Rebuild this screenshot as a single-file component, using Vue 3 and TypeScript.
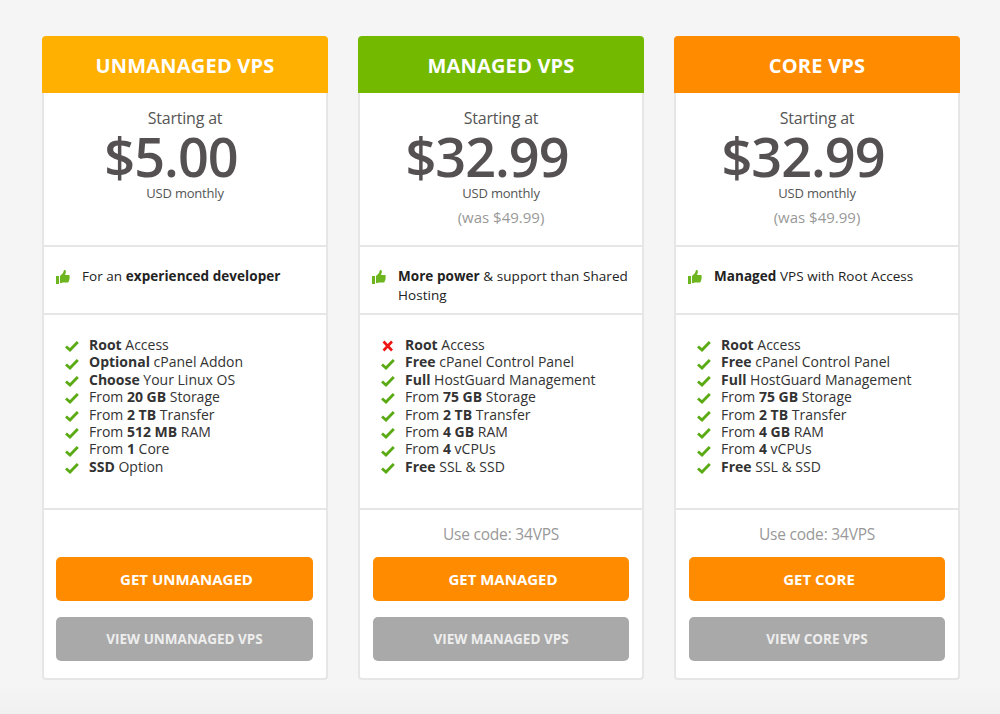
<script setup lang="ts">
interface Feature { bold: string; rest: string; before?: string; no?: boolean }
interface Plan {
  title: string; color: string; price: string; was?: string;
  pitch: { bold: string; rest: string; pre?: string }; features: Feature[];
  code?: string; cta: string; view: string;
}
const managed = (first: boolean): Feature[] => [
  { bold: 'Root', rest: ' Access', no: first },
  { bold: 'Free', rest: ' cPanel Control Panel' },
  { bold: 'Full', rest: ' HostGuard Management' },
  { before: 'From ', bold: '75 GB', rest: ' Storage' },
  { before: 'From ', bold: '2 TB', rest: ' Transfer' },
  { before: 'From ', bold: '4 GB', rest: ' RAM' },
  { before: 'From ', bold: '4', rest: ' vCPUs' },
  { bold: 'Free', rest: ' SSL & SSD' },
]
const plans: Plan[] = [
  {
    title: 'UNMANAGED VPS', color: '#ffb000', price: '$5.00',
    pitch: { pre: 'For an ', bold: 'experienced developer', rest: '' },
    features: [
      { bold: 'Root', rest: ' Access' },
      { bold: 'Optional', rest: ' cPanel Addon' },
      { bold: 'Choose', rest: ' Your Linux OS' },
      { before: 'From ', bold: '20 GB', rest: ' Storage' },
      { before: 'From ', bold: '2 TB', rest: ' Transfer' },
      { before: 'From ', bold: '512 MB', rest: ' RAM' },
      { before: 'From ', bold: '1', rest: ' Core' },
      { bold: 'SSD', rest: ' Option' },
    ],
    cta: 'GET UNMANAGED', view: 'VIEW UNMANAGED VPS',
  },
  {
    title: 'MANAGED VPS', color: '#73b900', price: '$32.99', was: '(was $49.99)',
    pitch: { bold: 'More power', rest: ' & support than Shared Hosting' },
    features: managed(true), code: 'Use code: 34VPS',
    cta: 'GET MANAGED', view: 'VIEW MANAGED VPS',
  },
  {
    title: 'CORE VPS', color: '#ff8c00', price: '$32.99', was: '(was $49.99)',
    pitch: { bold: 'Managed', rest: ' VPS with Root Access' },
    features: managed(false), code: 'Use code: 34VPS',
    cta: 'GET CORE', view: 'VIEW CORE VPS',
  },
]
</script>

<template>
  <div class="page">
    <section v-for="p in plans" :key="p.title" class="card">
      <h2 class="head" :style="{ background: p.color }">{{ p.title }}</h2>
      <div class="panel price">
        <div class="start">Starting at</div>
        <div class="amount">{{ p.price }}</div>
        <div class="usd">USD monthly</div>
        <div v-if="p.was" class="was">{{ p.was }}</div>
      </div>
      <div class="panel pitch">
        <svg class="thumb" viewBox="0 0 14 14" width="14" height="14">
          <path fill="#6db51e" d="M0 6h3v8H0zM4 6 7 3 8 0c1.500-.2 2.200 1 1.800 2.500L9 5h3.500c1.200 0 1.500 1.300.9 2 .5.7.4 1.400-.1 1.900.3.8.1 1.400-.5 1.800.1 1-.4 1.700-1.300 1.800H6.500C5.400 13.500 4.700 13.200 4 12.800z"/>
        </svg>
        <p><span v-if="p.pitch.pre">{{ p.pitch.pre }}</span><b>{{ p.pitch.bold }}</b>{{ p.pitch.rest }}</p>
      </div>
      <ul class="panel features">
        <li v-for="f in p.features" :key="f.bold + f.rest">
          <svg v-if="f.no" class="mark" viewBox="0 0 14 12" width="14" height="12">
            <path fill="none" stroke="#f01414" stroke-width="2.600" d="M2.500 1.500 11 10.500M11 1.500 2.500 10.500"/>
          </svg>
          <svg v-else class="mark" viewBox="0 0 14 12" width="14" height="12">
            <path fill="none" stroke="#5aaa14" stroke-width="2.800" d="M1 6.500 5 10 12.800 2"/>
          </svg>
          <span>{{ f.before }}<b>{{ f.bold }}</b>{{ f.rest }}</span>
        </li>
      </ul>
      <div class="panel foot">
        <div class="code">{{ p.code }}</div>
        <a class="btn cta">{{ p.cta }}</a>
        <a class="btn view">{{ p.view }}</a>
      </div>
    </section>
  </div>
</template>

<style>
body { background: #f4f4f4; }
</style>

<style scoped>
.page {
  box-sizing: border-box;
  width: 1000px;
  height: 714px;
  padding: 36px 40px 0 42px;
  display: flex;
  gap: 30px;
  align-items: flex-start;
  background: linear-gradient(#f5f5f5 0, #f5f5f5 685px, #f0f0f0 714px);
  font-family: "Open Sans", sans-serif;
  color: #333;
}
.card { width: 286px; display: flex; flex-direction: column; }
.head {
  margin: 0;
  height: 57px;
  line-height: 60px;
  text-align: center;
  color: #fff;
  font-size: 20px;
  font-weight: 700;
  letter-spacing: 0.2px;
  border-radius: 4px 4px 0 0;
}
.panel {
  box-sizing: border-box;
  background: #fff;
  border: 2px solid #e6e6e6;
  border-top: 0;
  margin: 0;
}
.price { height: 154px; padding-top: 15px; text-align: center; color: #555; }
.start { font-size: 16px; line-height: 20px; letter-spacing: -0.2px; }
.amount {
  font-size: 54px; line-height: 55px; font-weight: 600; color: #555052;
  letter-spacing: -1px; margin-right: 28px; margin-top: 1px;
}
.usd { font-size: 13px; line-height: 18px; letter-spacing: -0.2px; }
.was { font-size: 15px; line-height: 20px; margin-top: 5px; color: #999; }
.pitch {
  height: 68px;
  padding: 20px 14px 0 12px;
  display: flex;
  align-items: flex-start;
  gap: 12px;
  font-size: 13.500px;
  line-height: 19px;
  letter-spacing: 0.05px;
  color: #222;
}
.pitch p { margin: 0; }
.thumb { flex: none; margin-top: 3px; }
.pitch b, .features b { font-weight: 700; }
.features {
  height: 195px;
  list-style: none;
  padding: 21px 0 0 21px;
  font-size: 14px;
  line-height: 17.400px;
  color: #333;
}
.features li { display: flex; align-items: center; gap: 10px; height: 17.400px; }
.mark { flex: none; margin-top: 3px; }
.foot {
  height: 170px;
  padding: 14px 13px 0;
  border-radius: 0 0 4px 4px;
  display: flex;
  flex-direction: column;
  align-items: stretch;
}
.card:first-child .foot { padding-left: 12px; }
.code { height: 20px; line-height: 20px; font-size: 15.500px; text-align: center; color: #999; letter-spacing: -0.2px; }
.btn {
  display: block;
  height: 44px;
  border-radius: 5px;
  text-align: center;
  color: #fff;
  font-weight: 700;
}
.cta { background: #ff8c00; font-size: 15px; line-height: 45px; margin-top: 13px; padding-left: 4px; box-sizing: border-box; }
.view { background: #a9a9a9; font-size: 13.500px; line-height: 44px; margin-top: 16px; color: #eee; }
</style>
